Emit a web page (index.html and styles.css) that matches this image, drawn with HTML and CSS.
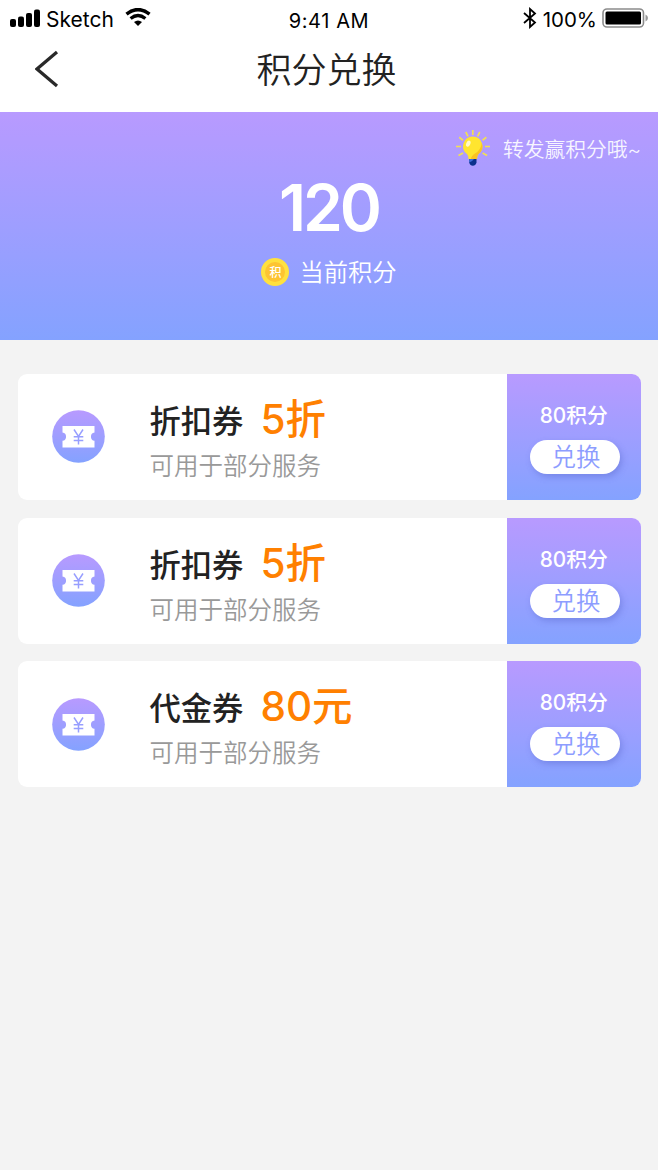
FILE: index.html
```
<!DOCTYPE html>
<html lang="zh-CN">
<head>
<meta charset="utf-8">
<title>积分兑换</title>
<link rel="stylesheet" href="styles.css">
</head>
<body>
<svg class="defs" width="0" height="0" aria-hidden="true">
  <defs>
    <linearGradient id="violet" x1="0" y1="0" x2="0" y2="1"><stop offset="0" stop-color="#b89aff"/><stop offset="1" stop-color="#84a2ff"/></linearGradient>
    <symbol id="coupon" viewBox="0 0 53 53">
      <circle cx="26.5" cy="26.5" r="26.3" fill="url(#violet)"/>
      <path d="M10.500 16H42.500V22.500A4.200 4.200 0 0 0 42.500 30.800V37.500H10.500V30.800A4.200 4.200 0 0 0 10.500 22.500Z" fill="#fff"/>
      <path d="M22 19.500L26.500 26.300L31 19.500M21.700 26.700H31.300M21.700 30.400H31.300M26.500 26.300V34.500" fill="none" stroke="#979eff" stroke-width="1.500"/>
    </symbol>
  </defs>
</svg>
<header class="top">
  <div class="status">
    <div class="status-left">
      <svg class="signal" width="30" height="18" viewBox="0 0 30 18"><rect x="0" y="10" width="6" height="8" rx="2"/><rect x="8" y="7.500" width="6" height="10.500" rx="2"/><rect x="16" y="4" width="6" height="14" rx="2"/><rect x="24" y="0.500" width="6" height="17.500" rx="2"/></svg>
      <span class="carrier">Sketch</span>
      <svg class="wifi" width="26" height="18" viewBox="0 0 26 18"><path d="M1.500 6.200Q13-3 24.500 6.200" stroke-width="3.500"/><path d="M5.600 10.500Q13 4.600 20.400 10.500" stroke-width="3.300"/><path d="M9 14Q13 10.900 17 14L13 18Z" class="wifi-dot"/></svg>
    </div>
    <span class="time">9:41 AM</span>
    <div class="status-right">
      <svg class="bluetooth" width="14" height="22" viewBox="0 0 14 22"><path d="M1 6L12 15.500L7 20V2L12 6.500L1 16"/></svg>
      <span class="percent">100%</span>
      <svg class="battery" width="47" height="20" viewBox="0 0 47 20"><rect x="1" y="1" width="40.500" height="18" rx="4" fill="none" stroke="#8c8c8c" stroke-width="1.600"/><rect x="3.500" y="3.500" width="35.500" height="13" rx="1.500"/><path d="M43.500 6.500Q46 7.500 46 10T43.500 13.500Z" fill="#999"/></svg>
    </div>
  </div>
  <div class="nav">
    <svg class="back" width="24" height="38" viewBox="0 0 24 38"><path d="M22 2L2 19L22 36"/></svg>
    <h1 class="title">积分兑换</h1>
  </div>
</header>
<section class="hero">
  <div class="share">
    <svg class="bulb" width="36" height="38" viewBox="0 0 36 38">
      <path d="M17.800 1V6M10.800 3L13 7.400M24.800 3L22.600 7.400M4.200 8.300L8 11.200M31.400 8.300L27.600 11.200M1 17.500H6M30 17.500H35M3.500 26.500L8 24M32.100 26.500L27.600 24" fill="none" stroke="#f1df55" stroke-width="1.700"/>
      <path d="M14.200 30H21.500V33.500Q20.500 36.800 17.800 36.800T14.200 33.500Z" fill="#0b318d"/>
      <path d="M14.200 30H19Q17 33 14.200 33.500Z" fill="#3e6bd7"/>
      <path d="M17.800 7.500A9.700 9.700 0 0 1 23.500 25Q22 26.500 22 30H13.500Q13.500 26.500 12 25A9.700 9.700 0 0 1 17.800 7.500Z" fill="#ffe52f"/>
      <path d="M26.800 14A9.700 9.700 0 0 1 23.500 25Q22 26.500 22 30H16Q16 27 20 24.500Q26 21 26.800 14Z" fill="#fbc321"/>
      <ellipse cx="13.300" cy="14.700" rx="2" ry="3.200" fill="#fff9c9" transform="rotate(25 13.300 14.700)"/>
    </svg>
    <span class="share-text">转发赢积分哦~</span>
  </div>
  <div class="points">120</div>
  <div class="current"><span class="coin">积</span><span class="current-text">当前积分</span></div>
</section>
<main class="list">
  <article class="card">
    <svg class="card-icon" width="53" height="53"><use href="#coupon"/></svg>
    <div class="info"><div class="line"><span class="name">折扣券</span><span class="value">5折</span></div><p class="note">可用于部分服务</p></div>
    <div class="redeem"><span class="cost">80积分</span><button class="button">兑换</button></div>
  </article>
  <article class="card">
    <svg class="card-icon" width="53" height="53"><use href="#coupon"/></svg>
    <div class="info"><div class="line"><span class="name">折扣券</span><span class="value">5折</span></div><p class="note">可用于部分服务</p></div>
    <div class="redeem"><span class="cost">80积分</span><button class="button">兑换</button></div>
  </article>
  <article class="card">
    <svg class="card-icon" width="53" height="53"><use href="#coupon"/></svg>
    <div class="info"><div class="line"><span class="name">代金券</span><span class="value">80元</span></div><p class="note">可用于部分服务</p></div>
    <div class="redeem"><span class="cost">80积分</span><button class="button">兑换</button></div>
  </article>
</main>
</body>
</html>
```
FILE: styles.css
```
* { box-sizing: border-box; }
body { margin: 0; min-height: 1170px; background: #f3f3f3; color: #222; font-family: Inter, "Noto Sans CJK SC", sans-serif; }
.defs { display: block; }
.top { height: 112px; background: #fff; }
.status { height: 38px; display: grid; grid-template-columns: 1fr auto 1fr; color: #000; font-size: 21px; line-height: 40px; }
.status-left { display: flex; padding-left: 10px; }
.signal { margin-top: 9px; }
.carrier { margin-left: 6px; width: 74px; }
.wifi { margin: 8px 0 0 5px; fill: none; stroke: #000; }
.wifi-dot { fill: #000; stroke: none; }
.time { font-size: 20px; line-height: 42px; letter-spacing: 0.6px; }
.status-right { display: flex; justify-content: flex-end; padding-right: 9px; }
.bluetooth { margin: 7px 1px 0 0; fill: none; stroke: #000; stroke-width: 1.8; }
.percent { margin: 0 5px; font-size: 20.5px; }
.battery { margin-top: 8px; }
.nav { height: 74px; display: grid; grid-template-columns: 1fr auto 1fr; }
.back { margin: 12px 0 0 35px; fill: none; stroke: #292929; stroke-width: 3.2; }
.title { margin: 0 5px 0 0; font-size: 35px; line-height: 60px; font-weight: 350; font-family: "Noto Sans CJK SC", sans-serif; }
.hero { height: 228px; background: linear-gradient(#b89aff, #84a2ff); color: #fff; display: flex; flex-direction: column; align-items: center; }
.share { align-self: flex-end; height: 64px; padding: 17px 17px 0 0; display: flex; }
.share-text { margin-left: 12px; font-size: 20.8px; line-height: 41px; font-weight: 350; letter-spacing: -0.05px; opacity: .9; white-space: nowrap; }
.points { height: 64px; font-size: 64px; line-height: 63px; font-weight: 600; letter-spacing: -3px; }
.current { height: 64px; display: flex; align-items: center; }
.coin { width: 28px; height: 28px; border: 4px solid #ffe13e; border-radius: 50%; background: #fdc432; font-size: 12px; line-height: 21px; font-weight: 500; text-align: center; }
.current-text { margin-left: 10px; font-size: 24.3px; line-height: 38px; font-weight: 350; }
.list { padding: 34px 17.5px 0; display: flex; flex-direction: column; gap: 17.7px; }
.card { height: 126px; display: flex; border-radius: 9px; overflow: hidden; background: #fff; }
.card-icon { margin: 36.3px 44.3px 0 34.7px; }
.info { flex: 1; padding-top: 17px; }
.line { display: flex; height: 57px; white-space: nowrap; }
.name { font-size: 31.3px; line-height: 63px; font-weight: 500; }
.value { margin-left: 17px; font-size: 40.5px; line-height: 57px; font-weight: 500; color: #ff8000; }
.note { margin: 0; font-size: 24.5px; line-height: 37px; font-weight: 350; color: #999; }
.redeem { width: 133.5px; background: linear-gradient(#b89aff, #84a2ff); display: flex; flex-direction: column; align-items: center; padding-top: 27px; }
.cost { height: 39px; color: #fff; font-size: 20.8px; line-height: 30px; font-weight: 500; }
.button { width: 90px; height: 34px; margin-left: 1.5px; padding: 0 0 2px 3px; border: 0; border-radius: 17px; background: #fff; color: #8d9dff; box-shadow: 2px 3px 6px rgba(75, 90, 190, .35); font: 350 24.5px/32px "Noto Sans CJK SC", sans-serif; }
```
